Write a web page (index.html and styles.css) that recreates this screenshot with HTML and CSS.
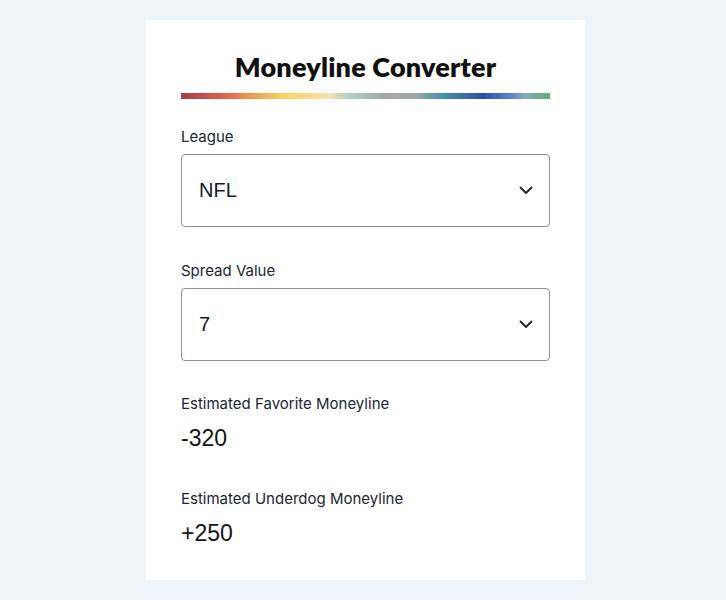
FILE: index.html
```html
<!DOCTYPE html>
<html lang="en">
<head>
<meta charset="utf-8">
<title>Moneyline Converter</title>
<link rel="stylesheet" href="styles.css">
</head>
<body>
<main class="card">
  <h1 class="title">Moneyline Converter</h1>
  <div class="rainbow"></div>

  <div class="field">
    <label class="label">League</label>
    <div class="select">
      <span class="select-value">NFL</span>
      <svg class="chevron" width="14" height="9" viewBox="0 0 14 9"><path d="M1.5 1.5 L7 7 L12.5 1.5" fill="none" stroke="#1e2430" stroke-width="1.8" stroke-linecap="round" stroke-linejoin="round"/></svg>
    </div>
  </div>

  <div class="field">
    <label class="label">Spread Value</label>
    <div class="select">
      <span class="select-value">7</span>
      <svg class="chevron" width="14" height="9" viewBox="0 0 14 9"><path d="M1.5 1.5 L7 7 L12.5 1.5" fill="none" stroke="#1e2430" stroke-width="1.8" stroke-linecap="round" stroke-linejoin="round"/></svg>
    </div>
  </div>

  <div class="result">
    <div class="label">Estimated Favorite Moneyline</div>
    <div class="result-value">-320</div>
  </div>

  <div class="result">
    <div class="label">Estimated Underdog Moneyline</div>
    <div class="result-value">+250</div>
  </div>
</main>
</body>
</html>
```

FILE: styles.css
```css
* { box-sizing: border-box; }
body {
  margin: 0;
  background: #f0f5f9;
  font-family: "Inter", "Liberation Sans", sans-serif;
  color: #1b2533;
}
.card {
  width: 439px;
  height: 560px;
  margin: 20px 0 0 146px;
  background: #ffffff;
  padding: 30px 35px 0 35px;
  display: flex;
  flex-direction: column;
}
.title {
  margin: 0;
  text-align: center;
  font-family: "Lato", sans-serif;
  font-weight: 800;
  font-size: 27px;
  line-height: 34px;
  color: #111111;
  letter-spacing: 0.2px;
}
.rainbow {
  height: 6px;
  margin-top: 9px;
  background: linear-gradient(90deg,
    #a0404c 0%, #d65c4c 10%, #ec8a4e 17%, #f6d25a 27%, #f7e2a8 40%,
    #a8d2c2 46%, #a6a6a6 55%, #9aa6a4 64%, #3a8ea4 72%, #2e4fae 82%,
    #4a7cd0 88%, #8aa6b8 93%, #5fb07c 100%);
}
.field { margin-top: 28px; }
.field + .field { margin-top: 34px; }
.label {
  display: block;
  font-family: "Inter", sans-serif;
  font-size: 15px;
  line-height: 20px;
  color: #1b2533;
  letter-spacing: 0;
}
.select {
  margin-top: 7px;
  height: 73px;
  border: 1px solid #8c9098;
  border-radius: 4px;
  display: flex;
  align-items: center;
  justify-content: space-between;
  padding: 0 16px 0 17px;
}
.select-value {
  font-family: "Liberation Sans", Arial, sans-serif;
  font-size: 20px;
  color: #111a28;
}
.chevron { display: block; }
.result { margin-top: 33px; }
.result + .result { margin-top: 38px; }
.result-value {
  margin-top: 11px;
  font-family: "Liberation Sans", Arial, sans-serif;
  font-size: 23px;
  line-height: 26px;
  color: #141414;
}
```
